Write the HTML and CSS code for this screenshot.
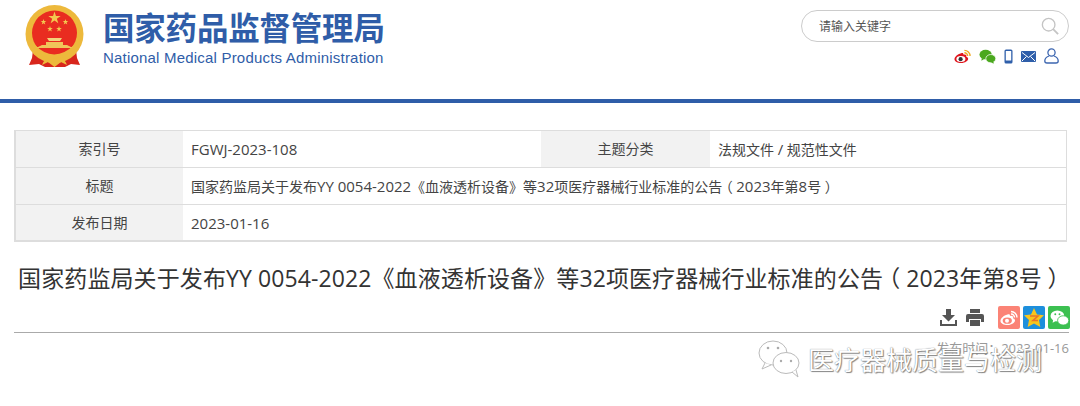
FILE: index.html
```html
<!DOCTYPE html>
<html lang="zh-CN">
  <head>
    <meta charset="UTF-8" />
    <title>国家药品监督管理局</title>
    <link rel="stylesheet" href="styles.css">
  </head>
  <body>
    <header class="header">
      <div class="logo">
        <svg class="emblem" width="60" height="64" viewBox="0 0 60 64">
          <defs>
            <path id="star" d="M0 -1 L.225 -.309 L.951 -.309 L.363 .118 L.588 .809 L0 .382 L-.588 .809 L-.363 .118 L-.951 -.309 L-.225 -.309 Z" fill="#f3c94f" />
          </defs>
          <path d="M8 46 L7 54 L4 61 L14 60 L20 63 L40 63 L46 60 L55 61 L52 54 L51 46 Z" fill="#d8261c" />
          <circle cx="29.5" cy="30" r="29" fill="#edb93c" />
          <circle cx="29.5" cy="29" r="22.5" fill="#e92c20" />
          <path d="M9 40 Q29 61 50 40 L50 44 Q29 66 9 44 Z" fill="#edb93c" />
          <path d="M11 44 L48 44 L42 41 L38 41 L38 38 L21 38 L21 41 L17 41 Z" fill="#f0c65a" />
          <path d="M24 37 L35 37 L37 34 L22 34 Z" fill="#f3d47a" />
          <use href="#star" transform="translate(29.5 14) scale(6.5)" />
          <use href="#star" transform="translate(18.5 18) scale(3)" />
          <use href="#star" transform="translate(40.5 18) scale(3)" />
          <use href="#star" transform="translate(25 25) scale(3)" />
          <use href="#star" transform="translate(34 25) scale(3)" />
          <path d="M17 61 Q21 51 29.5 55 Q38 51 42 61 L36 58 L29.5 63 L23 58 Z" fill="#edb93c" />
        </svg>
        <div class="logo-text">
          <div class="logo-cn">国家药品监督管理局</div>
          <div class="logo-en">National Medical Products Administration</div>
        </div>
      </div>
      <div class="tools">
        <div class="search">
          <span>请输入关键字</span>
          <svg width="18" height="18" viewBox="0 0 20 20" fill="none" stroke="#c4c4c4" stroke-width="1.5">
            <circle cx="8.5" cy="8.5" r="7" />
            <path d="M13.5 13.5 L19 19" stroke-width="2" />
          </svg>
        </div>
        <div class="links">
          <svg width="17" height="15" viewBox="0 0 18 15">
            <path d="M7.5 4 C3.5 5 .5 8 .5 10.5 C.5 13 4 14.5 7.5 14.5 C12 14.5 15 12 15 10 C15 8.5 13.5 8 13 7.8 C13.6 6 12.5 5 10 5.5 C10 4 9.5 3.3 7.5 4 Z" fill="#e0141c" />
            <ellipse cx="7.3" cy="10.2" rx="4.8" ry="3.2" fill="#fff" />
            <circle cx="7" cy="10.3" r="2.2" fill="#333" />
            <path d="M11 1 A6 6 0 0 1 17 7 M11 3.5 A3.4 3.4 0 0 1 14.5 7" fill="none" stroke="#f0a81e" stroke-width="1.4" />
          </svg>
          <svg width="17" height="15" viewBox="0 0 18 15">
            <ellipse cx="7" cy="5.5" rx="6.5" ry="5.2" fill="#4ba81f" />
            <path d="M3 9 L2.5 12 L6 10 Z" fill="#4ba81f" />
            <ellipse cx="12.5" cy="9.8" rx="5.3" ry="4.4" fill="#4ba81f" stroke="#fff" stroke-width=".8" />
            <path d="M15 13 L16 15 L12.5 14 Z" fill="#4ba81f" />
          </svg>
          <svg width="9" height="15" viewBox="0 0 9 15">
            <rect x=".5" y=".5" width="8" height="14" rx="1.5" fill="#2f5faa" />
            <rect x="1.8" y="2" width="5.4" height="9.5" fill="#fff" />
          </svg>
          <svg width="15" height="11" viewBox="0 0 15 11">
            <rect width="15" height="11" rx="1" fill="#2f5faa" />
            <path d="M1 1.5 L7.5 6.5 L14 1.5 M1 10 L5.5 5.5 M14 10 L9.5 5.5" fill="none" stroke="#fff" stroke-width="1" />
          </svg>
          <svg width="15" height="16" viewBox="0 0 15 16" fill="none" stroke="#3d66b0" stroke-width="1.3">
            <circle cx="7.5" cy="4.5" r="3.6" />
            <path d="M5 8 C2 9 .8 11 .8 13 C.8 14.5 1.5 15 3 15 L12 15 C13.5 15 14.2 14.5 14.2 13 C14.2 11 13 9 10 8" />
          </svg>
        </div>
      </div>
    </header>

    <main class="main">
      <div class="info">
        <div class="info-row">
          <div class="info-label">索引号</div>
          <div class="info-value"><span class="lat">FGWJ-2023-108</span></div>
          <div class="info-label info-label-2">主题分类</div>
          <div class="info-value info-wide">法规文件 <span class="lat">/</span> 规范性文件</div>
        </div>
        <div class="info-row">
          <div class="info-label">标题</div>
          <div class="info-value info-wide">国家药监局关于发布<span class="lat">YY 0054-2022</span>《血液透析设备》等<span class="lat">32</span>项医疗器械行业标准的公告<span class="paren">（</span><span class="lat">2023</span>年第<span class="lat">8</span>号<span class="paren">）</span></div>
        </div>
        <div class="info-row">
          <div class="info-label">发布日期</div>
          <div class="info-value info-wide"><span class="lat">2023-01-16</span></div>
        </div>
      </div>

      <h1 class="title">国家药监局关于发布YY 0054-2022《血液透析设备》等32项医疗器械行业标准的公告<span class="paren">（</span>2023年第8号<span class="paren">）</span></h1>

      <div class="actions">
        <svg width="17" height="17" viewBox="0 0 17 17" fill="#555">
          <path d="M6 0 H11 V6 H15 L8.5 12.5 L2 6 H6 Z" />
          <path d="M0 11 H2 V15 H15 V11 H17 V17 H0 Z" />
        </svg>
        <svg class="print" width="18" height="17" viewBox="0 0 18 17" fill="#555">
          <path d="M4 0 H14 V4 H4 Z" />
          <path d="M2 5 H16 Q18 5 18 7 V13 H15 V10 H3 V13 H0 V7 Q0 5 2 5 Z" />
          <path d="M4 11 H14 V17 H4 Z" />
        </svg>
        <span class="share share-weibo">
          <svg width="18" height="16" viewBox="0 0 18 15">
            <path d="M7.5 4 C3.5 5 .5 8 .5 10.5 C.5 13 4 14.5 7.5 14.5 C12 14.5 15 12 15 10 C15 8.5 13.5 8 13 7.8 C13.6 6 12.5 5 10 5.5 C10 4 9.5 3.3 7.5 4 Z" fill="#fff" />
            <ellipse cx="7.3" cy="10.2" rx="4.6" ry="3.1" fill="#fb8376" />
            <circle cx="7" cy="10.3" r="2" fill="#fff" />
            <path d="M11 1 A6 6 0 0 1 17 7 M11 3.5 A3.4 3.4 0 0 1 14.5 7" fill="none" stroke="#fff" stroke-width="1.4" />
          </svg>
        </span>
        <span class="share share-qzone">
          <svg width="20" height="19" viewBox="0 0 20 19">
            <path d="M10 0 L13 6.5 L20 7.3 L15 12 L16.3 19 L10 15.6 L3.7 19 L5 12 L0 7.3 L7 6.5 Z" fill="#f7c51e" />
            <path d="M6 8 H14 L9 12.5 H14" fill="none" stroke="#e8742a" stroke-width="1.6" />
          </svg>
        </span>
        <span class="share share-wechat">
          <svg width="19" height="16" viewBox="0 0 18 15">
            <ellipse cx="7" cy="5.5" rx="6.5" ry="5.2" fill="#fff" />
            <path d="M3 9 L2.5 12 L6 10 Z" fill="#fff" />
            <ellipse cx="12.5" cy="9.8" rx="5.3" ry="4.4" fill="#fff" stroke="#3cc051" stroke-width=".8" />
            <circle cx="5" cy="4" r=".9" fill="#3cc051" />
            <circle cx="9" cy="4" r=".9" fill="#3cc051" />
          </svg>
        </span>
      </div>

      <div class="date">发布时间：2023-01-16</div>
    </main>

    <div class="watermark">
      <svg width="44" height="38" viewBox="0 0 44 38" fill="#fff" stroke="#bbb" stroke-width="1">
        <ellipse cx="15" cy="13" rx="14" ry="12" />
        <path d="M7 23 L4 29 L13 25" />
        <ellipse cx="28" cy="23" rx="13" ry="10.5" />
        <path d="M34 32 L40 37 L38 30" />
        <circle cx="10" cy="8" r="1.3" fill="#aaa" stroke="none" />
        <circle cx="20" cy="8" r="1.3" fill="#aaa" stroke="none" />
        <circle cx="23" cy="21" r="1.2" fill="#aaa" stroke="none" />
        <circle cx="33" cy="21" r="1.2" fill="#aaa" stroke="none" />
      </svg>
      <span>医疗器械质量与检测</span>
    </div>
  </body>
</html>
```

FILE: styles.css
```css
html,
body {
  margin: 0;
  padding: 0;
}
body {
  position: relative;
  height: 406px;
  overflow: hidden;
  background: #fff;
  font-family: "Open Sans", "Noto Sans CJK SC", sans-serif;
  color: #333;
}

.header {
  display: flex;
  justify-content: space-between;
  height: 99px;
  border-bottom: 4px solid #2f5da8;
}
.logo {
  display: flex;
  align-items: flex-start;
  padding: 4px 0 0 25px;
}
.logo-text {
  margin: 3px 0 0 18px;
}
.logo-cn {
  font-family: "Noto Sans CJK SC", sans-serif;
  font-size: 31.5px;
  font-weight: 700;
  line-height: 38px;
  letter-spacing: -0.2px;
  color: #2f5da8;
  white-space: nowrap;
}
.logo-en {
  margin-top: 5px;
  font-family: "Liberation Sans", sans-serif;
  font-size: 15px;
  line-height: 16px;
  letter-spacing: 0.2px;
  color: #2f5da8;
  white-space: nowrap;
}

.tools {
  width: 279px;
  padding: 10px 11px 0 0;
  box-sizing: border-box;
}
.search {
  display: flex;
  justify-content: space-between;
  align-items: center;
  box-sizing: border-box;
  height: 32px;
  padding: 0 9px 0 17px;
  border: 1px solid #ccc;
  border-radius: 16px;
  font-size: 12px;
  color: #555;
}
.links {
  display: flex;
  justify-content: flex-end;
  align-items: center;
  gap: 8px;
  height: 16px;
  margin-top: 6px;
  padding-right: 10px;
}

.main {
  padding: 27px 11px 0 14px;
}
.info {
  border: 1px solid #ddd;
  border-bottom-width: 2px;
  border-left-width: 2px;
  width: 1053px;
  box-sizing: border-box;
}
.info-row {
  display: flex;
  height: 37px;
  border-bottom: 1px solid #ddd;
  box-sizing: border-box;
}
.info-row:last-child {
  border-bottom: 0;
  height: 35px;
}
.info-label {
  flex: 0 0 167px;
  background: #f2f2f2;
  font-size: 14px;
  line-height: 36px;
  text-align: center;
  color: #444;
}
.info-label-2 {
  flex-basis: 169px;
}
.info-value {
  flex: 0 0 350px;
  padding-left: 8px;
  font-size: 14px;
  line-height: 36px;
  color: #444;
  white-space: nowrap;
}
.info-wide {
  flex: 1;
}
.lat {
  font-size: 15px;
}
/* half-width glyph with room on both sides, the parens sit centred */
.paren {
  font-feature-settings: "halt";
  margin: 0 0.25em;
}

.title {
  margin: 18px 0 0 0;
  font-size: 23px;
  font-weight: 400;
  line-height: 36px;
  letter-spacing: 0.1px;
  text-align: center;
  color: #333;
  white-space: nowrap;
}

.actions {
  display: flex;
  justify-content: flex-end;
  align-items: center;
  gap: 3px;
  height: 25px;
  margin-top: 9px;
  padding-bottom: 2px;
  border-bottom: 1px solid #aaa;
}
.actions > svg {
  margin-right: 6px;
}
.actions .print {
  margin-right: 11px;
}
.share {
  display: flex;
  justify-content: center;
  align-items: center;
  width: 22px;
  height: 23px;
  border-radius: 2px;
}
.share-weibo {
  background: #fb8376;
}
.share-qzone {
  background: #1d8fdc;
}
.share-wechat {
  margin-right: -1px;
  background: #3cc051;
}

.date {
  margin-top: 5px;
  font-size: 13px;
  line-height: 20px;
  text-align: right;
  color: #999;
}

.watermark {
  position: absolute;
  top: 340px;
  left: 758px;
  display: flex;
  align-items: center;
  gap: 6px;
  font-family: "Noto Sans CJK SC", sans-serif;
  font-size: 26px;
  line-height: 38px;
  color: #fff;
  text-shadow: 0 0 1px #666, 1px 1px 1px #888;
  white-space: nowrap;
}
```
